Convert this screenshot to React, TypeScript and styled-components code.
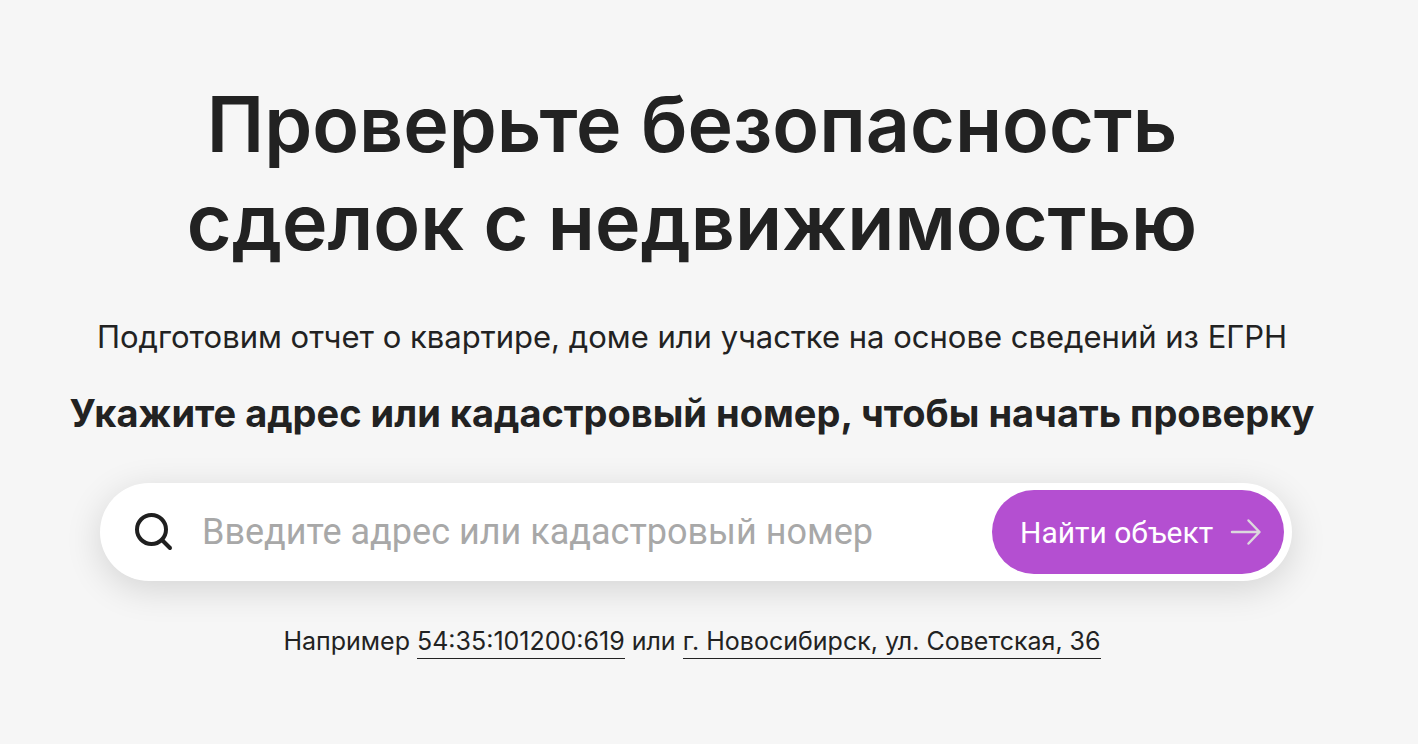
import React from 'react';
import styled, { createGlobalStyle } from 'styled-components';

const GlobalStyle = createGlobalStyle`
  *, *::before, *::after { box-sizing: border-box; }
  body {
    margin: 0;
    background: #f6f6f6;
    color: #222;
    font-family: Inter, sans-serif;
  }
`;

const Page = styled.main`
  display: flex;
  flex-direction: column;
  align-items: center;
  min-height: 100vh;
  padding: 75px 34px 64px 0;
  text-align: center;
`;

const Title = styled.h1`
  margin: 0;
  font-size: 77px;
  line-height: 98px;
  font-weight: 600;
`;

const Lead = styled.p`
  margin: 46px 0 0;
  font-size: 31px;
  line-height: 40px;
  white-space: nowrap;
`;

const Prompt = styled.h2`
  margin: 32px 0 0;
  font-size: 38px;
  line-height: 48px;
  font-weight: 700;
  white-space: nowrap;
`;

const SearchForm = styled.form`
  display: flex;
  align-items: center;
  align-self: stretch;
  height: 98px;
  margin: 46px 92px 0 100px;
  padding: 0 8px 0 32px;
  border-radius: 49px;
  background: #fff;
  box-shadow: 0 8px 36px rgba(0, 0, 0, 0.14);
`;

const SearchInput = styled.input`
  flex: 1;
  min-width: 0;
  height: 64px;
  margin: 0 16px 0 26px;
  padding: 0;
  border: 0;
  outline: 0;
  background: transparent;
  color: #222;
  font-family: Roboto, sans-serif;
  font-size: 36px;
  &::placeholder { color: #a8a8a8; opacity: 1; }
`;

const SubmitButton = styled.button`
  display: flex;
  align-items: center;
  justify-content: space-between;
  flex: none;
  width: 292px;
  height: 84px;
  padding: 0 22px 0 28px;
  border: 0;
  border-radius: 42px;
  background: #b44fd1;
  color: #fff;
  font-family: Roboto, sans-serif;
  font-size: 30px;
  white-space: nowrap;
  cursor: pointer;
`;

const Examples = styled.p`
  margin: 42px 0 0;
  font-size: 25px;
  line-height: 36px;
  white-space: nowrap;
`;

const ExampleLink = styled.a`
  display: inline-block;
  border-bottom: 1px solid #222;
  line-height: 34px;
  color: inherit;
  text-decoration: none;
`;

export default function App() {
  return (
    <>
      <GlobalStyle />
      <Page>
        <Title>Проверьте безопасность<br />сделок с недвижимостью</Title>
        <Lead>Подготовим отчет о квартире, доме или участке на основе сведений из ЕГРН</Lead>
        <Prompt>Укажите адрес или кадастровый номер, чтобы начать проверку</Prompt>
        <SearchForm onSubmit={(e: React.FormEvent) => e.preventDefault()}>
          <svg width="44" height="44" viewBox="0 0 44 44" fill="none" stroke="#1f1f1f" strokeWidth="4" strokeLinecap="round" aria-hidden="true">
            <circle cx="19.5" cy="19.5" r="14.5" />
            <path d="M30 30L38 38" />
          </svg>
          <SearchInput type="text" aria-label="Адрес или кадастровый номер" placeholder="Введите адрес или кадастровый номер" />
          <SubmitButton type="submit">
            Найти объект
            <svg width="32" height="32" viewBox="0 0 32 32" fill="none" stroke="#dcd9dd" strokeWidth="2.5" strokeLinecap="round" strokeLinejoin="round" aria-hidden="true">
              <path d="M2 16H29M18.500 4.500L29.500 16L18.500 27.500" />
            </svg>
          </SubmitButton>
        </SearchForm>
        <Examples>
          Например <ExampleLink href="#cadastral">54:35:101200:619</ExampleLink> или{' '}
          <ExampleLink href="#address">г. Новосибирск, ул. Советская, 36</ExampleLink>
        </Examples>
      </Page>
    </>
  );
}
